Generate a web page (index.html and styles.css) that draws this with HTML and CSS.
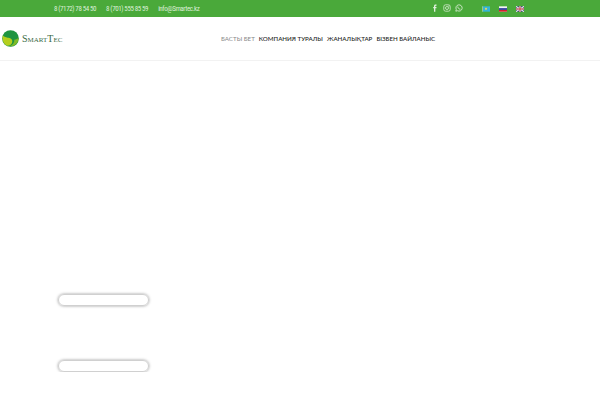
FILE: index.html
```html
<!DOCTYPE html>
<html lang="kk">
<head>
    <meta charset="UTF-8">
    <meta name="viewport" content="width=device-width, initial-scale=1.0">
    <title>SmartTec</title>
    <link rel="stylesheet" href="styles.css">
</head>
<body>
    <div class="topbar">
        <div class="contacts">
            <span>8 (7172) 78 54 50</span>
            <span>8 (701) 555 85 59</span>
            <span>info@Smartec.kz</span>
        </div>
        <div class="social">
            <svg class="icon" viewBox="0 0 10 10"><path d="M6.9 0.6H5.6C4.4 0.6 3.8 1.4 3.8 2.5V3.8H2.8V5.3H3.8V9.6H5.4V5.3H6.7L6.9 3.8H5.4V2.8C5.4 2.4 5.6 2.1 6 2.1H6.9Z" fill="#e4f2e1"/></svg>
            <svg class="icon" viewBox="0 0 10 10" fill="none" stroke="#d5ead1"><rect x="1" y="1" width="8" height="8" rx="2.2"/><circle cx="5" cy="5" r="1.9"/><circle cx="7.4" cy="2.6" r="0.3"/></svg>
            <svg class="icon" viewBox="0 0 10 10" fill="none" stroke="#e4f2e1"><path d="M1 9L1.6 6.8A3.9 3.9 0 1 1 3.2 8.4Z"/><path d="M3.5 3.2C3.5 5 5 6.5 6.8 6.5" stroke-width="1.1"/></svg>
        </div>
        <div class="flags">
            <svg class="flag" viewBox="0 0 12 8"><rect width="12" height="8" fill="#35b5d6"/><circle cx="6" cy="3.8" r="1.7" fill="#e3d65a"/><rect x="0.6" width="1" height="8" fill="#cfd65e"/></svg>
            <svg class="flag" viewBox="0 0 12 8"><rect width="12" height="8" fill="#f4f4f4"/><rect y="2.7" width="12" height="2.7" fill="#2a3f9d"/><rect y="5.4" width="12" height="2.6" fill="#d3202c"/></svg>
            <svg class="flag" viewBox="0 0 12 8"><rect width="12" height="8" fill="#3b3f78"/><path d="M0 0L12 8M12 0L0 8" stroke="#eee" stroke-width="1.6"/><path d="M6 0V8M0 4H12" stroke="#eee" stroke-width="2.6"/><path d="M6 0V8M0 4H12" stroke="#c9252f" stroke-width="1.3"/></svg>
        </div>
    </div>

    <header class="header">
        <a class="logo">
            <svg class="logo-mark" viewBox="0 0 18 18">
                <circle cx="9" cy="9" r="8.8" fill="#1f9440"/>
                <path d="M.9 5.6C-.4 10 1.6 15 5.4 16.6C9 17 11.8 13.8 10.6 10.6C9.6 8.2 6.4 8.6 4.4 7.8C2.8 7.2 1.6 6.6.9 5.6Z" fill="#b5cf1e"/>
                <path d="M17.6 8C17.8 11.4 16 15 12.4 16.8C10.8 17.3 9.4 17.3 8.2 17C11.8 15.6 13.4 12.6 13 10.2C14.8 10.2 16.6 9.4 17.6 8Z" fill="#7fbb25"/>
            </svg>
            <span class="logo-text">SmartTec</span>
        </a>
        <nav class="nav">
            <a class="active">БАСТЫ БЕТ</a>
            <a>КОМПАНИЯ ТУРАЛЫ</a>
            <a>ЖАНАЛЫҚТАР</a>
            <a>БІЗБЕН БАЙЛАНЫС</a>
        </nav>
    </header>

    <main class="content">
        <div class="pill"></div>
        <div class="pill"></div>
    </main>
</body>
</html>
```

FILE: styles.css
```css
body {
    margin: 0;
    font-family: Roboto, sans-serif;
    background-color: #fff;
    color: #222;
}
.topbar {
    display: flex;
    align-items: center;
    height: 17px;
    background-color: #4aa93a;
    color: #dcefd8;
    font-family: "Liberation Sans Narrow", Roboto, sans-serif;
    font-size: 7px;
    font-stretch: condensed;
    letter-spacing: -0.4px;
}
.contacts {
    display: flex;
    gap: 10px;
    margin-left: 54px;
    width: 377px;
}
.social {
    display: flex;
    gap: 4px;
    width: 51px;
    margin-top: -2px;
}
.icon {
    width: 8px;
    height: 8px;
}
.flags {
    display: flex;
    gap: 9px;
}
.flag {
    width: 8px;
    height: 6px;
}
.header {
    display: flex;
    align-items: center;
    height: 43px;
    border-bottom: 1px solid #f2f2f2;
}
.logo {
    display: flex;
    align-items: center;
    gap: 3px;
    width: 221px;
    padding-left: 2px;
    box-sizing: border-box;
}
.logo-mark {
    width: 17px;
    height: 17px;
}
.logo-text {
    font-family: "Liberation Serif", serif;
    font-variant: small-caps;
    font-size: 10px;
    color: #3b6b45;
}
.nav {
    display: flex;
    gap: 4px;
    font-family: Lato, sans-serif;
    font-size: 6.2px;
    font-weight: 500;
}
.nav a {
    color: #222;
}
.nav a.active {
    color: #888;
    font-weight: 400;
}
.content {
    padding-top: 233px;
    padding-left: 58px;
}
.pill {
    width: 91px;
    height: 12px;
    box-sizing: border-box;
    border: 1px solid #d0d0d0;
    border-radius: 6px;
    box-shadow: 0 0 3px rgba(0, 0, 0, 0.4);
}
.pill + .pill {
    margin-top: 54px;
}
```
